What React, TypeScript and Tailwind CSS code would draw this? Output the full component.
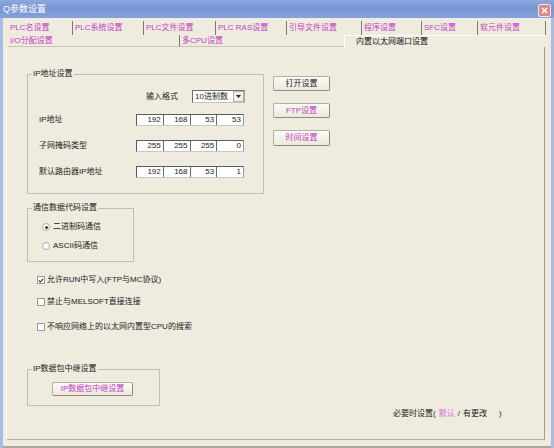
import React from "react";

const PINK = "text-[#c23ec4]";

function Group({
  title,
  className,
  children,
}: {
  title: string;
  className: string;
  children?: React.ReactNode;
}) {
  return (
    <div className={`relative border border-[#c2beb1] ${className}`}>
      <span className="absolute -top-[6px] left-[4px] bg-[#efebdf] px-[1px] leading-[10px] text-[#222]">
        {title}
      </span>
      {children}
    </div>
  );
}

function IPField({ values }: { values: string[] }) {
  return (
    <div className="flex h-[12px] w-[108px] border border-t-[#5a5a5a] border-l-[#5a5a5a] border-r-[#9a9a9a] border-b-[#c8c8c8] bg-white">
      {values.map((v, i) => (
        <div
          key={i}
          className={`flex flex-1 items-center justify-end pr-[2px] leading-none text-[#222] ${
            i < 3 ? "border-r border-[#6a6a6a]" : ""
          }`}
        >
          {v}
        </div>
      ))}
    </div>
  );
}

function Btn({
  label,
  pink,
  className,
}: {
  label: string;
  pink?: boolean;
  className: string;
}) {
  return (
    <div
      className={`flex items-center justify-center rounded-[2px] border border-[#b3b0a4] border-b-[#8d8a80] border-r-[#8d8a80] bg-gradient-to-b from-[#fbfaf6] to-[#ebe8dc] leading-none ${
        pink ? PINK : "text-[#222]"
      } ${className}`}
    >
      {label}
    </div>
  );
}

function Radio({ checked, label }: { checked?: boolean; label: string }) {
  return (
    <div className="flex h-[10px] items-center">
      <div className="flex h-[8px] w-[8px] items-center justify-center rounded-full border border-[#a9a9a9] bg-white">
        {checked && <div className="h-[3px] w-[3px] rounded-full bg-[#333]" />}
      </div>
      <span className="ml-[3px] leading-none text-[#222]">{label}</span>
    </div>
  );
}

function Check({ checked, label }: { checked?: boolean; label: string }) {
  return (
    <div className="flex h-[10px] items-center">
      <div className="flex h-[8px] w-[8px] items-center justify-center border border-[#9a9a9a] bg-white">
        {checked && (
          <svg width="7" height="7" viewBox="0 0 7 7">
            <path d="M1 3.5 L2.8 5.3 L6 1.5" stroke="#333" strokeWidth="1.3" fill="none" />
          </svg>
        )}
      </div>
      <span className="ml-[2px] leading-none text-[#222]">{label}</span>
    </div>
  );
}

const row1: [string, number][] = [
  ["PLC名设置", 64],
  ["PLC系统设置", 71],
  ["PLC文件设置", 72],
  ["PLC RAS设置", 71],
  ["引导文件设置", 75],
  ["程序设置", 60],
  ["SFC设置", 56],
  ["软元件设置", 68],
];

export default function App() {
  return (
    <div className="flex h-[448px] w-[554px] flex-col overflow-hidden bg-[#a9bce3] font-['Liberation_Sans','Noto_Sans_CJK_SC',sans-serif] text-[8px]">
      {/* Title bar */}
      <div className="relative flex h-[18px] items-center bg-gradient-to-b from-[#8ea8de] via-[#7896d6] to-[#86a2dc] px-[3px]">
        <span className="text-[9px] leading-none text-white">Q参数设置</span>
        <div className="absolute right-[3px] top-[4px] flex h-[13px] w-[13px] items-center justify-center rounded-[2px] border border-[#f3e3e3] bg-[#d98a86]">
          <svg width="7" height="7" viewBox="0 0 7 7">
            <path d="M1 1 L6 6 M6 1 L1 6" stroke="white" strokeWidth="1.6" />
          </svg>
        </div>
      </div>

      {/* Body */}
      <div className="mx-[3px] flex flex-1 flex-col bg-[#efebdf] pt-[3px]">
        {/* Tabs row 1 */}
        <div className="flex h-[14px] pl-[5px]">
          {row1.map(([t, w], i) => (
            <div
              key={t}
              style={{ width: w }}
              className={`flex h-[14px] items-center pl-[2px] ${PINK} ${
                i > 0 ? "border-l border-[#7c7a74]" : ""
              } leading-none`}
            >
              {t}
            </div>
          ))}
          <div className="h-[14px] border-l border-[#7c7a74]" />
        </div>
        {/* Tabs row 2 */}
        <div className="flex h-[12px] pl-[5px]">
          <div className={`flex w-[171px] items-center pl-[2px] leading-none ${PINK} border-b border-[#c9c5b8]`}>
            I/O分配设置
          </div>
          <div className={`flex w-[165px] items-center border-l border-b border-[#c9c5b8] border-l-[#7c7a74] pl-[2px] leading-none ${PINK}`}>
            多CPU设置
          </div>
          <div className="flex w-[201px] items-center border-l border-t border-white pl-[11px] leading-none text-[#111]">
            内置以太网端口设置
          </div>
        </div>

        {/* Panel */}
        <div className="ml-[3px] flex h-[393px] w-[539px] flex-col border border-l-[#fbfaf6] border-t-0 border-r-[#9f9c90] border-b-[#b8b5a8]">
          {/* Top section */}
          <div className="mt-[27px] flex pl-[20px]">
            <Group title="IP地址设置" className="h-[120px] w-[237px]">
              <div className="mt-[15px] flex h-[13px] items-center pl-[118px]">
                <span className="w-[46px] leading-none text-[#222]">输入格式</span>
                <div className="flex h-[13px] w-[53px] items-center border border-[#6f6f6f] border-r-[#a0a0a0] border-b-[#c0c0c0] bg-white">
                  <span className="flex-1 pl-[2px] leading-none text-[#222]">10进制数</span>
                  <div className="flex h-[11px] w-[11px] items-center justify-center border border-[#b8b5a8] bg-[#f1efe6]">
                    <svg width="5" height="3" viewBox="0 0 5 3">
                      <path d="M0 0 H5 L2.5 3 Z" fill="#222" />
                    </svg>
                  </div>
                </div>
              </div>
              {[
                ["IP地址", ["192", "168", "53", "53"]],
                ["子网掩码类型", ["255", "255", "255", "0"]],
                ["默认路由器IP地址", ["192", "168", "53", "1"]],
              ].map(([label, vals], i) => (
                <div
                  key={label as string}
                  className={`flex h-[12px] items-center pl-[11px] ${i === 0 ? "mt-[11px]" : "mt-[14px]"}`}
                >
                  <span className="w-[97px] leading-none text-[#222]">{label as string}</span>
                  <IPField values={vals as string[]} />
                </div>
              ))}
            </Group>
            <div className="ml-[9px] mt-[2px] flex flex-col gap-[12px]">
              <Btn label="打开设置" className="h-[15px] w-[57px]" />
              <Btn label="FTP设置" pink className="h-[15px] w-[57px]" />
              <Btn label="时间设置" pink className="h-[16px] w-[57px]" />
            </div>
          </div>

          {/* Comm code group */}
          <Group title="通信数据代码设置" className="ml-[20px] mt-[14px] h-[54px] w-[107px]">
            <div className="ml-[14px] mt-[13px] flex flex-col gap-[9px]">
              <Radio checked label="二进制码通信" />
              <Radio label="ASCII码通信" />
            </div>
          </Group>

          {/* Checkboxes */}
          <div className="ml-[30px] mt-[13px]">
            <Check checked label="允许RUN中写入(FTP与MC协议)" />
          </div>
          <div className="ml-[30px] mt-[12px]">
            <Check label="禁止与MELSOFT直接连接" />
          </div>
          <div className="ml-[30px] mt-[15px]">
            <Check label="不响应网络上的以太网内置型CPU的搜索" />
          </div>

          {/* IP relay group */}
          <Group title="IP数据包中继设置" className="ml-[20px] mt-[37px] h-[37px] w-[133px]">
            <Btn label="IP数据包中继设置" pink className="ml-[24px] mt-[12px] h-[14px] w-[81px]" />
          </Group>

          {/* Bottom note */}
          <div className="ml-[386px] mt-[3px] flex h-[10px] items-center leading-none text-[#222]">
            <span>必要时设置(</span>
            <span className="ml-[3px] text-[#d070d0]">默认</span>
            <span className="ml-[3px]">/</span>
            <span className="ml-[3px]">有更改</span>
            <span className="ml-[12px]">)</span>
          </div>
        </div>
        <div className="flex-1" />
        <div className="h-[2px] bg-[#aaa699]" />
      </div>
    </div>
  );
}
